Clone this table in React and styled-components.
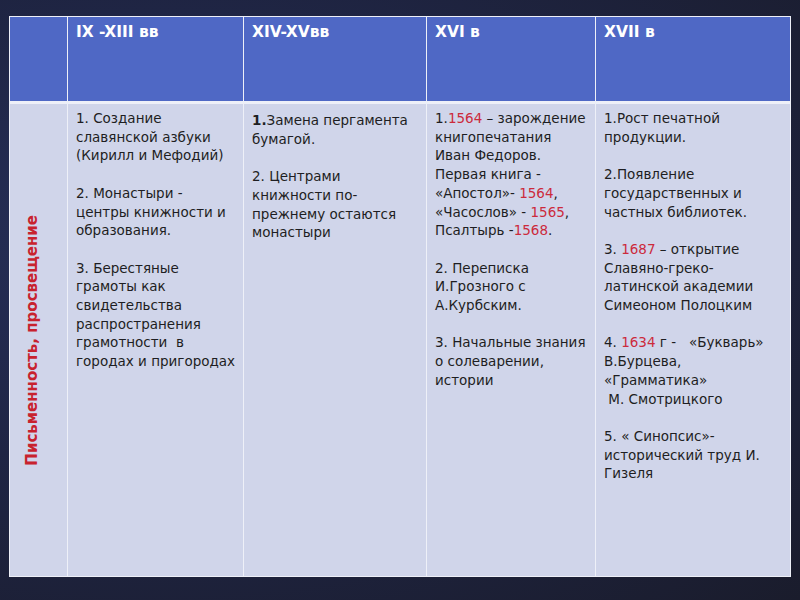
import React from "react";
import styled, { createGlobalStyle } from "styled-components";

const Global = createGlobalStyle`
  html, body {
    margin: 0;
    padding: 0;
  }
  body {
    width: 800px;
    height: 600px;
    overflow: hidden;
    background: radial-gradient(ellipse at 20% 40%, #27305a 0%, #1f2544 45%, #1a1c2c 100%);
  }
`;

const Page = styled.div`
  width: 800px;
  height: 600px;
  padding: 16px 0 0 9px;
  box-sizing: border-box;
`;

const Table = styled.div`
  width: 782px;
  height: 561px;
  box-sizing: border-box;
  display: grid;
  grid-template-columns: 57px 175px 182px 168px 1fr;
  grid-template-rows: 84px 1fr;
  column-gap: 1px;
  row-gap: 3px;
  padding: 1px;
  background: #eef0f8;
  font-family: "DejaVu Sans", "Liberation Sans", sans-serif;
`;

const Head = styled.div`
  background: #4f68c5;
  color: #ffffff;
  font-size: 15.5px;
  font-weight: bold;
  padding: 6px 0 0 8px;
  line-height: 18px;
`;

const Side = styled.div`
  background: #d0d5ea;
  display: flex;
  align-items: center;
  padding-left: 13px;
`;

const SideLabel = styled.div`
  writing-mode: vertical-rl;
  transform: rotate(180deg);
  color: #c8222e;
  font-size: 15px;
  font-weight: bold;
  white-space: nowrap;
`;

const Cell = styled.div`
  background: #d0d5ea;
  color: #1e1e22;
  font-size: 13.5px;
  line-height: 18.7px;
  padding: ${(p) => p.$top || 5}px 0 0 8px;
`;

const Para = styled.div`
  margin-bottom: 18.7px;
`;

const Line = styled.div`
  white-space: pre;
`;

const Red = styled.span`
  color: #cc2a3c;
`;

const B = styled.b`
  font-weight: bold;
`;

export default function App() {
  return (
    <>
      <Global />
      <Page>
        <Table>
          <Head />
          <Head>IX -XIII вв</Head>
          <Head>XIV-XVвв</Head>
          <Head>XVI в</Head>
          <Head>XVII в</Head>

          <Side>
            <SideLabel>Письменность, просвещение</SideLabel>
          </Side>

          <Cell>
            <Para>
              <Line>1. Создание</Line>
              <Line>славянской азбуки</Line>
              <Line>(Кирилл и Мефодий)</Line>
            </Para>
            <Para>
              <Line>2. Монастыри -</Line>
              <Line>центры книжности и</Line>
              <Line>образования.</Line>
            </Para>
            <Para>
              <Line>3. Берестяные</Line>
              <Line>грамоты как</Line>
              <Line>свидетельства</Line>
              <Line>распространения</Line>
              <Line>грамотности  в</Line>
              <Line>городах и пригородах</Line>
            </Para>
          </Cell>

          <Cell $top={7}>
            <Para>
              <Line>
                <B>1.</B>Замена пергамента
              </Line>
              <Line>бумагой.</Line>
            </Para>
            <Para>
              <Line>2. Центрами</Line>
              <Line>книжности по-</Line>
              <Line>прежнему остаются</Line>
              <Line>монастыри</Line>
            </Para>
          </Cell>

          <Cell>
            <Para>
              <Line>
                1.<Red>1564</Red> – зарождение
              </Line>
              <Line>книгопечатания</Line>
              <Line>Иван Федоров.</Line>
              <Line>Первая книга -</Line>
              <Line>
                «Апостол»- <Red>1564</Red>,
              </Line>
              <Line>
                «Часослов» - <Red>1565</Red>,
              </Line>
              <Line>
                Псалтырь -<Red>1568</Red>.
              </Line>
            </Para>
            <Para>
              <Line>2. Переписка</Line>
              <Line>И.Грозного с</Line>
              <Line>А.Курбским.</Line>
            </Para>
            <Para>
              <Line>3. Начальные знания</Line>
              <Line>о солеварении,</Line>
              <Line>истории</Line>
            </Para>
          </Cell>

          <Cell>
            <Para>
              <Line>1.Рост печатной</Line>
              <Line>продукции.</Line>
            </Para>
            <Para>
              <Line>2.Появление</Line>
              <Line>государственных и</Line>
              <Line>частных библиотек.</Line>
            </Para>
            <Para>
              <Line>
                3. <Red>1687</Red> – открытие
              </Line>
              <Line>Славяно-греко-</Line>
              <Line>латинской академии</Line>
              <Line>Симеоном Полоцким</Line>
            </Para>
            <Para>
              <Line>
                4. <Red>1634</Red> г -   «Букварь»
              </Line>
              <Line>В.Бурцева,</Line>
              <Line>«Грамматика»</Line>
              <Line> М. Смотрицкого</Line>
            </Para>
            <Para>
              <Line>5. « Синопсис»-</Line>
              <Line>исторический труд И.</Line>
              <Line>Гизеля</Line>
            </Para>
          </Cell>
        </Table>
      </Page>
    </>
  );
}
